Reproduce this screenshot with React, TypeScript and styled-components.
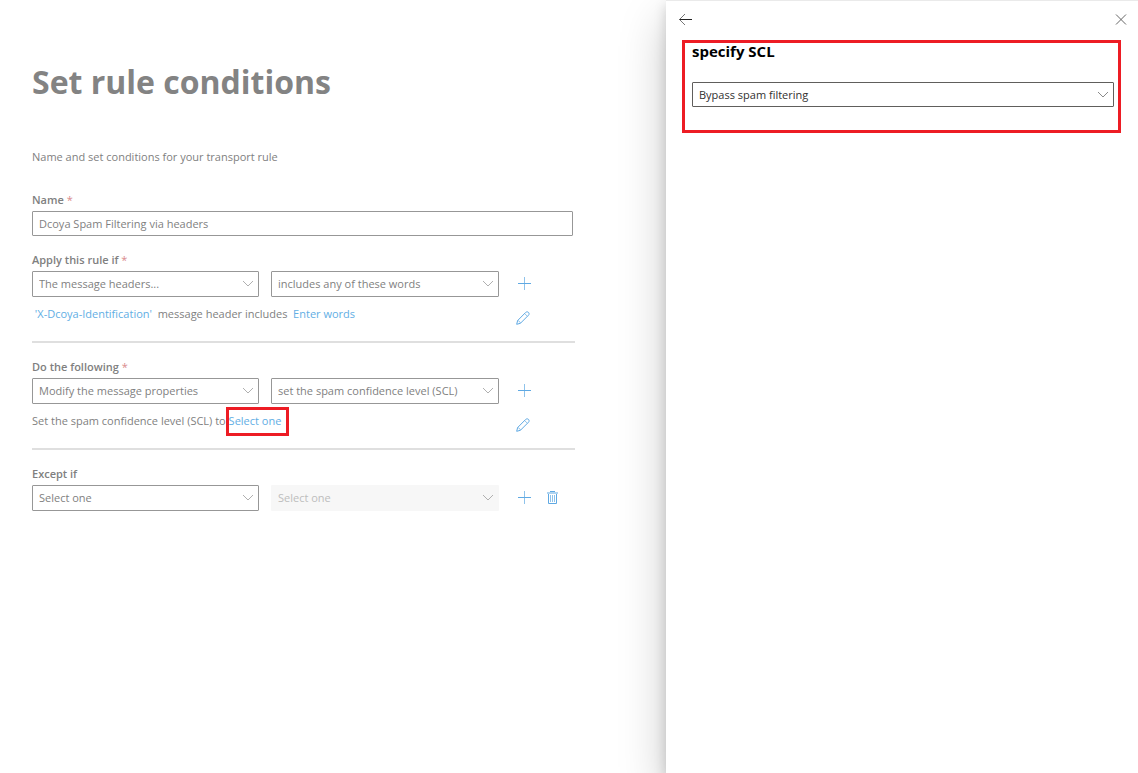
import React, { useState } from "react";
import styled, { createGlobalStyle } from "styled-components";

const GlobalStyle = createGlobalStyle`
  *, *::before, *::after { box-sizing: border-box; }
  body {
    margin: 0;
    background: #ffffff;
    color: #7f7f7f;
    font: 11px/16px "Segoe UI", "Open Sans", sans-serif;
  }
  button, input, select { font: inherit; color: inherit; }
`;

const Page = styled.div`
  display: flex;
  min-height: 100vh;
`;

const Main = styled.main`
  flex: 1;
  min-width: 0;
  padding: 58px 32px 32px;
`;

const Title = styled.h1`
  margin: 0;
  color: #838383;
  font-size: 32px;
  line-height: 48px;
  font-weight: 700;
`;

const Intro = styled.p`
  margin: 43px 0 27px;
`;

const Form = styled.form`
  max-width: 543px;
`;

const Group = styled.div`
  margin-bottom: 16px;
`;

const RuleGroup = styled.fieldset<{ $divided?: boolean }>`
  margin: 0 0 16px;
  padding: 0;
  border: 0;
  border-bottom: ${(p) => (p.$divided ? "2px solid #dfdfdf" : "0")};
`;

const Label = styled.label`
  display: block;
  width: fit-content;
  margin-bottom: 3px;
  font-weight: 600;
  color: #808080;
`;

const Required = styled.span`
  color: #d98a8c;
  font-weight: 400;
`;

const TextInput = styled.input`
  display: block;
  width: calc(100% - 2px);
  height: 25px;
  padding: 0 6px;
  border: 1px solid #979797;
  border-radius: 1px;
  background: #ffffff;
`;

const Row = styled.div`
  display: flex;
  align-items: center;
`;

const SelectPair = styled.div`
  display: grid;
  flex: 1;
  grid-template-columns: 227fr 228fr;
  gap: 12px;
`;

const Actions = styled.div`
  display: flex;
  width: 76px;
  padding-left: 19px;
  gap: 14px;
`;

const SelectWrap = styled.div`
  position: relative;
`;

const SelectBox = styled.select<{ $strong?: boolean }>`
  appearance: none;
  display: block;
  width: 100%;
  height: ${(p) => (p.$strong ? 25 : 26)}px;
  padding: 0 24px 0 6px;
  border: 1px solid ${(p) => (p.$strong ? "#605e5c" : "#979797")};
  border-radius: 1px;
  background: #ffffff;
  color: ${(p) => (p.$strong ? "#323130" : "#7f7f7f")};
  text-overflow: ellipsis;

  &:disabled {
    border-color: #f7f7f7;
    background: #f7f7f7;
    color: #bdbdbd;
    opacity: 1;
  }
`;

const Chevron = styled.svg`
  position: absolute;
  top: 9px;
  right: 5px;
  pointer-events: none;
`;

const Detail = styled.div`
  display: flex;
  height: 44px;
  padding-top: 9px;
`;

const Sentence = styled.div`
  flex: 1;
  white-space: pre;
`;

const Link = styled.a`
  color: #62aee4;
  text-decoration: none;
`;

const Marked = styled.span`
  position: relative;

  &::after {
    content: "";
    position: absolute;
    inset: -6px -8px -8px -3px;
    border: 3px solid #ed1c24;
    pointer-events: none;
  }
`;

const EditActions = styled(Actions)`
  padding: 5px 0 0 17px;
`;

const IconButton = styled.button`
  display: flex;
  width: 14px;
  height: 14px;
  padding: 0;
  border: 0;
  background: none;
  color: #5fa9e3;
  cursor: pointer;
`;

const Panel = styled.aside`
  width: 472px;
  flex-shrink: 0;
  padding: 12px 17px 32px 16px;
  border-top: 1px solid #eaeaea;
  background: #ffffff;
  box-shadow: 0 20px 44px rgba(0, 0, 0, 0.22), 0 5px 12px rgba(0, 0, 0, 0.16);
`;

const PanelBar = styled.div`
  display: flex;
  justify-content: space-between;
  margin: 0 -8px 13px -4px;
`;

const PanelButton = styled(IconButton)`
  width: 16px;
  color: #4a4a4a;
`;

const PanelSection = styled.section`
  height: 93px;
  padding: 0 4px 0 7px;
  border: 3px solid #ed1c24;
`;

const PanelTitle = styled.h2`
  margin: 0 0 23px;
  color: #000000;
  font-size: 15px;
  line-height: 16px;
  font-weight: 700;
`;

interface DropdownProps {
  id?: string;
  label?: string;
  options: string[];
  disabled?: boolean;
  strong?: boolean;
}

function Dropdown({ id, label, options, disabled, strong }: DropdownProps) {
  return (
    <SelectWrap>
      <SelectBox id={id} aria-label={label} disabled={disabled} $strong={strong}>
        {options.map((o) => (
          <option key={o}>{o}</option>
        ))}
      </SelectBox>
      <Chevron width="12" height="8" viewBox="0 0 12 8" fill="none" stroke={strong ? "#8a8a8a" : "#b0b0b0"}>
        <path d="M1 1 6 6 11 1" />
      </Chevron>
    </SelectWrap>
  );
}

function AddButton() {
  return (
    <IconButton type="button" aria-label="Add">
      <svg width="14" height="14" viewBox="0 0 14 14" fill="none" stroke="currentColor">
        <path d="M0 6.5H13" />
        <path d="M6.5 0V13" opacity=".7" />
      </svg>
    </IconButton>
  );
}

function EditButton() {
  return (
    <IconButton type="button" aria-label="Edit">
      <svg width="14" height="14" viewBox="0 0 14 14" fill="none" stroke="currentColor">
        <path d="M.7 13.3 1.6 9.6 9.6 1.5C10.4.7 11.7.6 12.5 1.4s.8 2 0 2.8L4.4 12.3Z" />
        <path d="M1.6 9.6C3 9.8 4.2 10.8 4.4 12.3M8.7 2.6l2.7 2.7" opacity=".7" />
      </svg>
    </IconButton>
  );
}

function DeleteButton() {
  return (
    <IconButton type="button" aria-label="Delete">
      <svg width="14" height="14" viewBox="0 0 14 14" fill="none" stroke="currentColor">
        <path d="M1 2H12" strokeWidth="2" opacity=".5" />
        <path d="M4 .5H9" />
        <path d="M2.5 3V12.5H10.5V3" />
        <path d="M4.5 4V11M6.5 4V11M8.5 4V11" opacity=".7" />
      </svg>
    </IconButton>
  );
}

export default function App() {
  const [name, setName] = useState("Dcoya Spam Filtering via headers");

  return (
    <>
      <GlobalStyle />
      <Page>
        <Main>
          <Title>Set rule conditions</Title>
          <Intro>Name and set conditions for your transport rule</Intro>
          <Form>
            <Group>
              <Label htmlFor="name">
                Name <Required>*</Required>
              </Label>
              <TextInput id="name" value={name} onChange={(e) => setName(e.target.value)} />
            </Group>

            <RuleGroup $divided>
              <Label htmlFor="condition">
                Apply this rule if <Required>*</Required>
              </Label>
              <Row>
                <SelectPair>
                  <Dropdown id="condition" options={["The message headers..."]} />
                  <Dropdown label="Condition match" options={["includes any of these words"]} />
                </SelectPair>
                <Actions>
                  <AddButton />
                </Actions>
              </Row>
              <Detail>
                <Sentence>
                  {" "}
                  <Link href="#header">'X-Dcoya-Identification'</Link>
                  {"  message header includes  "}
                  <Link href="#words">Enter words</Link>
                </Sentence>
                <EditActions>
                  <EditButton />
                </EditActions>
              </Detail>
            </RuleGroup>

            <RuleGroup $divided>
              <Label htmlFor="action">
                Do the following <Required>*</Required>
              </Label>
              <Row>
                <SelectPair>
                  <Dropdown id="action" options={["Modify the message properties"]} />
                  <Dropdown label="Property" options={["set the spam confidence level (SCL)"]} />
                </SelectPair>
                <Actions>
                  <AddButton />
                </Actions>
              </Row>
              <Detail>
                <Sentence>
                  {"Set the spam confidence level (SCL) to "}
                  <Marked>
                    <Link href="#scl">Select one</Link>
                  </Marked>
                </Sentence>
                <EditActions>
                  <EditButton />
                </EditActions>
              </Detail>
            </RuleGroup>

            <RuleGroup>
              <Label htmlFor="exception">Except if</Label>
              <Row>
                <SelectPair>
                  <Dropdown id="exception" options={["Select one"]} />
                  <Dropdown label="Exception match" options={["Select one"]} disabled />
                </SelectPair>
                <Actions>
                  <AddButton />
                  <DeleteButton />
                </Actions>
              </Row>
            </RuleGroup>
          </Form>
        </Main>

        <Panel>
          <PanelBar>
            <PanelButton type="button" aria-label="Back">
              <svg width="16" height="14" viewBox="0 0 16 14" fill="none" stroke="currentColor">
                <path d="M1 6.5H14" stroke="#222222" />
                <path d="M7 1 1.5 6.5 7 12" stroke="#777777" />
              </svg>
            </PanelButton>
            <PanelButton type="button" aria-label="Close">
              <svg width="16" height="14" viewBox="0 0 16 14" fill="none" stroke="#666666">
                <path d="M3 1.5 13 11.5M13 1.5 3 11.5" />
              </svg>
            </PanelButton>
          </PanelBar>
          <PanelSection>
            <PanelTitle>specify SCL</PanelTitle>
            <Dropdown label="specify SCL" options={["Bypass spam filtering"]} strong />
          </PanelSection>
        </Panel>
      </Page>
    </>
  );
}
